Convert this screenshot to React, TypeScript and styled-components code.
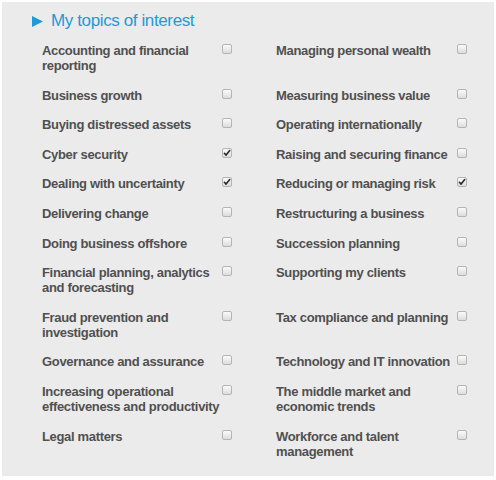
import styled, { createGlobalStyle } from "styled-components";

const GlobalStyle = createGlobalStyle`
  html, body {
    margin: 0;
    padding: 0;
    background: #ffffff;
  }
  body {
    font-family: "Liberation Sans", Arial, sans-serif;
  }
`;

type Topic = { label: string; checked?: boolean };

const topics: Topic[] = [
  { label: "Accounting and financial reporting" },
  { label: "Managing personal wealth" },
  { label: "Business growth" },
  { label: "Measuring business value" },
  { label: "Buying distressed assets" },
  { label: "Operating internationally" },
  { label: "Cyber security", checked: true },
  { label: "Raising and securing finance" },
  { label: "Dealing with uncertainty", checked: true },
  { label: "Reducing or managing risk", checked: true },
  { label: "Delivering change" },
  { label: "Restructuring a business" },
  { label: "Doing business offshore" },
  { label: "Succession planning" },
  { label: "Financial planning, analytics and forecasting" },
  { label: "Supporting my clients" },
  { label: "Fraud prevention and investigation" },
  { label: "Tax compliance and planning" },
  { label: "Governance and assurance" },
  { label: "Technology and IT innovation" },
  { label: "Increasing operational effectiveness and productivity" },
  { label: "The middle market and economic trends" },
  { label: "Legal matters" },
  { label: "Workforce and talent management" },
];

const CheckBox = ({ checked }: { checked?: boolean }) => (
  <S.Box>
    {checked && (
      <svg width="8" height="8" viewBox="0 0 8 8">
        <path
          d="M1.4 4.3 L3.1 6.1 L6.7 1.6"
          fill="none"
          stroke="#2a2a2a"
          strokeWidth="1.6"
          strokeLinecap="round"
          strokeLinejoin="round"
        />
      </svg>
    )}
  </S.Box>
);

const App = () => {
  return (
    <>
      <GlobalStyle />
      <S.Panel>
        <S.Title>
          <svg width="11" height="11" viewBox="0 0 11 11">
            <path d="M0 0 L11 5.5 L0 11 Z" fill="#1e9ad8" />
          </svg>
          My topics of interest
        </S.Title>
        <S.Grid>
          {topics.map((topic) => (
            <S.Item key={topic.label}>
              <S.Label>{topic.label}</S.Label>
              <CheckBox checked={topic.checked} />
            </S.Item>
          ))}
        </S.Grid>
      </S.Panel>
    </>
  );
};

export default App;

const S = {
  Panel: styled.div`
    margin: 2px;
    width: 492px;
    height: 474px;
    box-sizing: border-box;
    background: #ebebeb;
    padding: 9px 0 0 30px;
  `,
  Title: styled.h2`
    margin: 0;
    display: flex;
    align-items: center;
    gap: 8px;
    font-size: 17px;
    line-height: 20px;
    font-weight: normal;
    letter-spacing: -0.38px;
    color: #1e9ad8;

    svg {
      flex: none;
      margin-top: 1px;
    }
  `,
  Grid: styled.div`
    display: grid;
    grid-template-columns: 190px 191px;
    column-gap: 44px;
    row-gap: 14.6px;
    margin: 12px 0 0 10px;
  `,
  Item: styled.div`
    display: flex;
    align-items: flex-start;
    justify-content: space-between;
  `,
  Label: styled.span`
    width: 180px;
    font-size: 13px;
    line-height: 15px;
    font-weight: bold;
    letter-spacing: -0.33px;
    color: #505050;
  `,
  Box: styled.span`
    flex: none;
    width: 10px;
    height: 10px;
    margin-top: 1px;
    box-sizing: border-box;
    border: 1px solid #b4b4b4;
    border-radius: 2px;
    background: linear-gradient(#fbfbfb, #dcdcdc);
    display: flex;
    align-items: center;
    justify-content: center;
  `,
};
